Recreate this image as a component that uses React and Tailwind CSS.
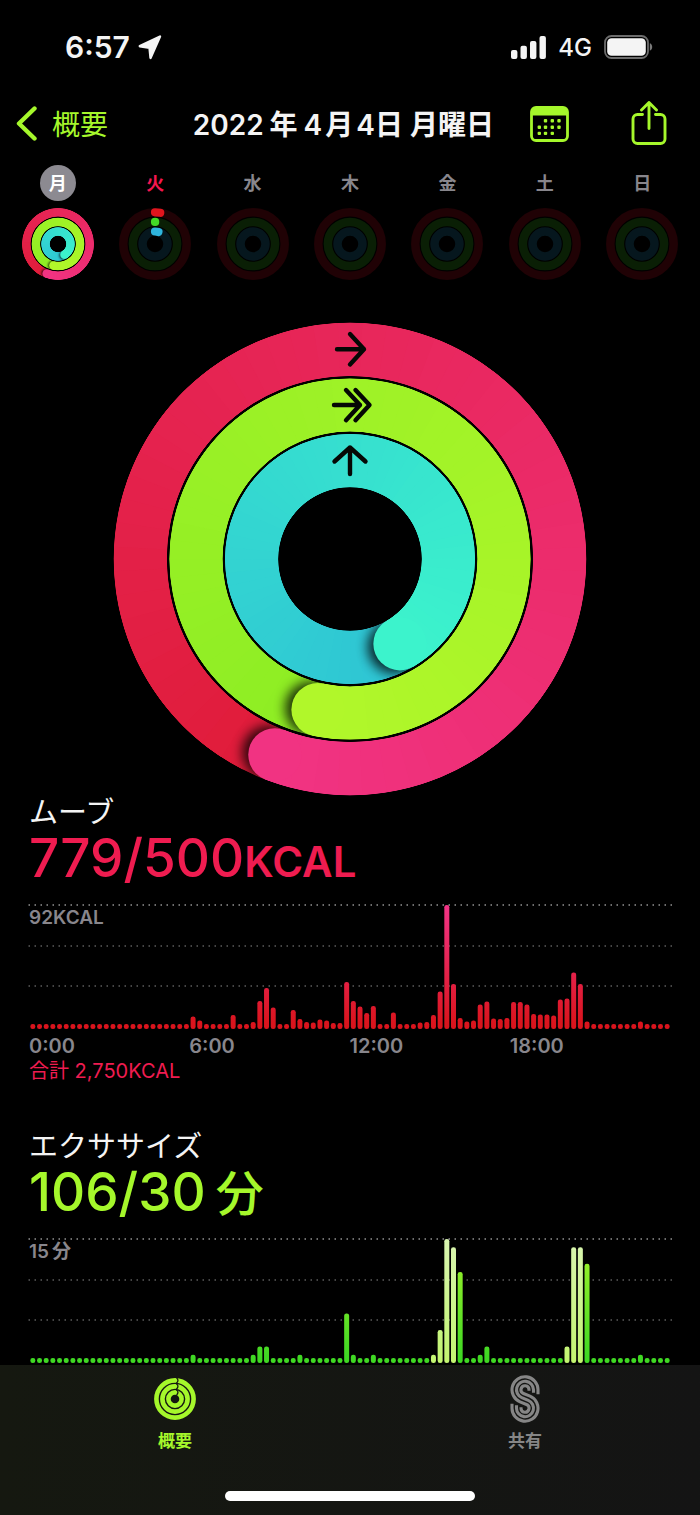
import React from 'react'

// ─── Shared geometry ──────────────────────────────────────────────────────────
// Angles are in degrees, clockwise from twelve o'clock, around (0, 0).
function point(r, deg) {
  const a = (deg * Math.PI) / 180
  return [r * Math.sin(a), -r * Math.cos(a)]
}

function arc(r, from, to) {
  const [x1, y1] = point(r, from)
  const [x2, y2] = point(r, to)
  return `M${x1} ${y1}A${r} ${r} 0 ${to - from > 180 ? 1 : 0} 1 ${x2} ${y2}`
}

function mix(a, b, t) {
  return `rgb(${a.map((v, i) => Math.round(v + (b[i] - v) * t)).join(',')})`
}

// ─── Ring colours ─────────────────────────────────────────────────────────────
const MOVE     = { from: [224, 28, 58],  to: [241, 51, 130], track: '#200205' }
const EXERCISE = { from: [142, 237, 36], to: [177, 247, 42], track: '#0a1f05' }
const STAND    = { from: [46, 196, 212], to: [60, 243, 204], track: '#06171e' }

const LARGE = [
  { ...MOVE,     r: 209.7, end: 201 },
  { ...EXERCISE, r: 154,   end: 192 },
  { ...STAND,    r: 98.4,  end: 149.5 },
]

const SMALL = [
  { ...MOVE,     r: 31.7, end: 201 },
  { ...EXERCISE, r: 22.1, end: 192 },
  { ...STAND,    r: 12.5, end: 149 },
]

// ─── Ring ─────────────────────────────────────────────────────────────────────
// A full lap ending in a round tip that casts a shadow on the lap's start.
// Each segment runs on under the next few so that no seam shows between them.
const STEPS = 60
const OVERLAP = 12

function Ring({ id, r, width, end, from, to }) {
  const step = 360 / STEPS
  const segments = Array.from({ length: STEPS }, (_, i) => {
    const start = end - 360 + i * step
    const stop = Math.min(end, start + step + OVERLAP)
    return (
      <path key={i} d={arc(r, start, stop)} stroke={mix(from, to, i / (STEPS - 1))} strokeWidth={width} fill="none" />
    )
  })
  const [cx, cy] = point(r, end)
  const [sx, sy] = point(r, end + (width / r) * 7)

  return (
    <g>
      <clipPath id={`${id}-band`}>
        <path
          clipRule="evenodd"
          d={[r + width / 2, r - width / 2]
            .map((q) => `M${-q} 0A${q} ${q} 0 1 1 ${q} 0A${q} ${q} 0 1 1 ${-q} 0Z`)
            .join('')}
        />
      </clipPath>
      <filter id={`${id}-blur`} x="-50%" y="-50%" width="200%" height="200%">
        <feGaussianBlur stdDeviation={width / 9} />
      </filter>
      <g clipPath={`url(#${id}-band)`}>
        {segments.slice(0, STEPS - 14)}
        <circle cx={sx} cy={sy} r={width / 2} fill="#000" opacity="0.8" filter={`url(#${id}-blur)`} />
        {segments.slice(STEPS - 14)}
      </g>
      <circle cx={cx} cy={cy} r={width / 2} fill={mix(from, to, 1)} />
    </g>
  )
}

function ActivityRings() {
  return (
    <svg viewBox="-237 -237 474 474" className="mx-auto block w-[474px] max-w-full" role="img" aria-label="アクティビティリング">
      {LARGE.map((ring, i) => (
        <Ring key={i} id={`large-${i}`} width={53.2} {...ring} />
      ))}
      <g fill="none" stroke="#050805" strokeWidth="4.4" strokeLinecap="round" strokeLinejoin="round">
        <path d="M-13 -209.8H14M0 -225L14 -209.8L0 -194.5" />
        <path d="M-16 -154H10M-4 -169L10 -154L-4 -138.8M5.5 -169L19.5 -154L5.5 -138.8" />
        <path d="M0 -85V-111.5M-15.5 -97.5L0 -111.5L15.5 -97.5" />
      </g>
    </svg>
  )
}

// ─── Week strip ───────────────────────────────────────────────────────────────
const DAYS = [
  { label: '月', state: 'selected' },
  { label: '火', state: 'today' },
  { label: '水' },
  { label: '木' },
  { label: '金' },
  { label: '土' },
  { label: '日' },
]

const LABEL_STYLES = {
  selected: 'bg-[#8c8a91] text-white',
  today:    'text-[#f5174f]',
  future:   'text-[#88868c]',
}

function DayRings({ state }) {
  return (
    <svg viewBox="-36 -36 72 72" className="block size-[72px]" aria-hidden="true">
      {state === 'selected'
        ? SMALL.map((ring, i) => <Ring key={i} id={`small-${i}`} width={8.5} {...ring} />)
        : SMALL.map(({ r, track }) => (
            <circle key={r} r={r} fill="none" stroke={track} strokeWidth="8.5" />
          ))}
      {state === 'today' && (
        <g fill="none" strokeWidth="8.2" strokeLinecap="round">
          <path d={arc(31.7, 0, 9.5)} stroke="#e0151d" />
          <path d={arc(22.1, 0, 0.5)} stroke="#43d926" />
          <path d={arc(12.5, 0, 16)} stroke="#2eb4dc" />
        </g>
      )}
    </svg>
  )
}

function WeekStrip() {
  return (
    <div className="grid grid-cols-7 px-[9px] pt-[17px]">
      {DAYS.map(({ label, state = 'future' }) => (
        <button key={label} type="button" className="flex flex-col items-center gap-[7px]">
          <span className={`flex size-[36px] items-center justify-center rounded-full pt-[2px] text-[18px] leading-none font-bold ${LABEL_STYLES[state]}`}>
            {label}
          </span>
          <DayRings state={state} />
        </button>
      ))}
    </div>
  )
}

// ─── Charts ───────────────────────────────────────────────────────────────────
// One bar per quarter of an hour, keyed by its index in the day.
const BARS = 96
const PLOT_W = 641
const PLOT_H = 124

const MOVE_BARS = {
  24: 12.5, 25: 8.5, 30: 14, 33: 7, 34: 28, 35: 41, 36: 21.5, 39: 19, 40: 10, 41: 7, 42: 6.5,
  43: 9.5, 44: 8.5, 45: 6, 46: 6, 47: 47, 48: 28, 49: 22.5, 50: 16, 51: 23, 54: 16.5,
  58: 6.5, 59: 7, 60: 14, 61: 37.5, 62: 124, 63: 45, 64: 11, 65: 7.5, 66: 8.5, 67: 24.5,
  68: 27.5, 69: 10.5, 70: 10, 71: 11, 72: 27, 73: 27, 74: 24.5, 75: 15, 76: 14.5, 77: 14.5,
  78: 13.5, 79: 29.5, 80: 30.5, 81: 56.5, 82: 45, 83: 7.5, 91: 7.5,
}

const EXERCISE_MINUTES = {
  24: 1, 33: 1, 34: 2, 35: 2, 40: 1, 47: 6, 48: 1, 51: 1, 60: 1, 61: 4, 62: 15, 63: 14,
  64: 11, 67: 1, 68: 2, 80: 2, 81: 14, 82: 14, 83: 12, 91: 1,
}
const EXERCISE_BARS = Object.fromEntries(
  Object.entries(EXERCISE_MINUTES).map(([i, min]) => [i, (min * PLOT_H) / 15]),
)
const WORKOUT = [60, 61, 62, 63, 80, 81, 82]

function Chart({ id, bars, bottom, top, highlighted = [], label }) {
  return (
    <svg viewBox={`0 0 ${PLOT_W} ${PLOT_H}`} className="block w-full overflow-visible" role="img" aria-label={label}>
      <defs>
        <linearGradient id={`${id}-fill`} gradientUnits="userSpaceOnUse" x1="0" x2="0" y1={PLOT_H} y2="0">
          <stop offset="0.05" stopColor={bottom} />
          <stop offset="1" stopColor={top} />
        </linearGradient>
        <linearGradient id={`${id}-light`} gradientUnits="userSpaceOnUse" x1="0" x2="0" y1={PLOT_H} y2="0">
          <stop offset="0" stopColor="#c2f56f" />
          <stop offset="1" stopColor="#d9f5b0" />
        </linearGradient>
      </defs>
      {[0, 41, 81].map((y, i) => (
        <line
          key={y} x1="-0.5" x2={PLOT_W + 2} y1={y} y2={y}
          stroke={i === 0 ? '#929292' : '#5c5c5c'} strokeWidth="1.5" strokeDasharray="1.5 4.5"
        />
      ))}
      {Array.from({ length: BARS }, (_, i) => {
        const h = bars[i] ?? 5
        return (
          <rect
            key={i}
            x={(i + 0.5) * (PLOT_W / BARS) - 2}
            y={PLOT_H - h}
            width="5" height={h} rx="2.3"
            fill={highlighted.includes(i) ? `url(#${id}-light)` : `url(#${id}-fill)`}
          />
        )
      })}
    </svg>
  )
}

function Metric({ title, value, unit, color, max, children }) {
  return (
    <section className="pr-[30px] pl-[29px]">
      <h2 className="pt-px text-[29px] leading-[32px] text-[#f4f4f4]">{title}</h2>
      <p className={`flex items-baseline text-[53px] leading-[58px] font-medium ${color}`}>
        {value}
        {unit}
      </p>
      <div className="relative mt-[18px]">
        {children}
        <span className="absolute top-0 left-0 text-[19px] leading-[26px] font-semibold text-[#88868c]">{max}</span>
      </div>
    </section>
  )
}

// ─── Icons ────────────────────────────────────────────────────────────────────
function LocationIcon() {
  return (
    <svg viewBox="0 0 24 25" className="w-[24px]" aria-hidden="true">
      <path d="M1.8 11.2L22 1.6L12.5 23L11.5 12.7Z" fill="#f4f4f4" stroke="#f4f4f4" strokeWidth="2.4" strokeLinejoin="round" />
    </svg>
  )
}

function SignalIcon() {
  return (
    <svg viewBox="0 0 35 23" className="w-[35px]" fill="#f4f4f4" aria-hidden="true">
      <rect x="0" y="14" width="6.4" height="9" rx="2" />
      <rect x="9.5" y="9.7" width="6.4" height="13.3" rx="2" />
      <rect x="19" y="5" width="6.4" height="18" rx="2" />
      <rect x="28.5" y="0" width="6.4" height="23" rx="2" />
    </svg>
  )
}

function BatteryIcon() {
  return (
    <svg viewBox="0 0 49 24" className="w-[49px]" aria-hidden="true">
      <rect x="1" y="1" width="43" height="22" rx="6.5" fill="none" stroke="#6c6c6c" strokeWidth="1.8" />
      <rect x="3.2" y="3.2" width="38.6" height="17.6" rx="4.4" fill="#f4f4f4" />
      <path d="M45.8 8.3C49 9.2 49 14.8 45.8 15.7Z" fill="#7a7a7a" />
    </svg>
  )
}

function CalendarIcon() {
  const dots = [
    [15.5, 14.5], [22.3, 14.5], [29, 14.5],
    [9.3, 21], [15.5, 21], [22.3, 21], [29, 21],
    [9.3, 27.2], [15.5, 27.2], [22.3, 27.2],
  ]
  return (
    <svg viewBox="0 0 39 36" className="w-[39px]" aria-hidden="true">
      <rect x="1.5" y="1.5" width="36" height="33" rx="4.5" fill="none" stroke="#a5f72b" strokeWidth="2.8" />
      <path d="M1 9.5V5.5C1 3 3 1 5.5 1H33.5C36 1 38 3 38 5.5V9.5Z" fill="#a5f72b" />
      {dots.map(([x, y]) => (
        <rect key={`${x}-${y}`} x={x - 1.7} y={y - 1.5} width="3.4" height="3.4" rx="1" fill="#a5f72b" />
      ))}
    </svg>
  )
}

function ShareIcon() {
  return (
    <svg viewBox="0 0 36 45" className="w-[36px]" fill="none" stroke="#a5f72b" strokeWidth="2.9" strokeLinecap="round" strokeLinejoin="round" aria-hidden="true">
      <path d="M11.5 13.5H6.5C4 13.5 2 15.5 2 18V38C2 40.5 4 42.5 6.5 42.5H29.5C32 42.5 34 40.5 34 38V18C34 15.5 32 13.5 29.5 13.5H24.5" />
      <path d="M18 27.5V2M10.5 9L18 1.5L25.5 9" />
    </svg>
  )
}

function RingsTabIcon() {
  return (
    <svg viewBox="-21 -21 42 42" className="w-[42px]" fill="none" stroke="#a5f72b" aria-hidden="true">
      <circle r="18.6" strokeWidth="4.6" />
      <circle r="12.6" strokeWidth="4.6" />
      <circle r="6.6" strokeWidth="4.6" />
      <path d="M1.6 -21C3.4 -19.5 3.4 -17.5 1.6 -16V-15C3.4 -13.8 3.4 -11.6 1.6 -10V-9C3.4 -7.8 3.4 -5.6 1.6 -4" stroke="#141611" strokeWidth="1.3" />
    </svg>
  )
}

// Three parallel strands: each goes round the upper bowl, along a shared
// diagonal, then round the lower bowl.
const BOWL_Y = 9.2
const STRANDS = [
  { upper: 13,  lower: 4,   head: 4.5, tail: 1 },
  { upper: 8.5, lower: 8.5, head: 3,   tail: 3 },
  { upper: 4,   lower: 13,  head: 1,   tail: 4.5 },
]

function strandPath({ upper, lower, head, tail }) {
  const ny = (upper + lower) / (2 * BOWL_Y)
  const nx = -Math.sqrt(1 - ny * ny)
  return [
    `M${upper} ${head - BOWL_Y}V${-BOWL_Y}`,
    `A${upper} ${upper} 0 1 0 ${upper * nx} ${upper * ny - BOWL_Y}`,
    `L${-lower * nx} ${BOWL_Y - lower * ny}`,
    `A${lower} ${lower} 0 1 1 ${-lower} ${BOWL_Y}V${BOWL_Y - tail}`,
  ].join('')
}

function SharingTabIcon() {
  return (
    <svg viewBox="-15 -24 30 48" className="h-[48px] w-[30px]" fill="none" stroke="#868686" strokeWidth="3.1" aria-hidden="true">
      {STRANDS.map((strand) => <path key={strand.upper} d={strandPath(strand)} />)}
    </svg>
  )
}

// ─── App ──────────────────────────────────────────────────────────────────────
const HOURS = ['0:00', '6:00', '12:00', '18:00']

export default function App() {
  return (
    <div
      lang="ja"
      className="flex min-h-screen flex-col bg-black font-['Inter','Noto_Sans_CJK_JP',sans-serif]"
    >
      {/* Status bar */}
      <div className="flex h-[94px] items-center justify-between pr-[47px] pl-[65px] text-[#f4f4f4]">
        <div className="flex items-center gap-[8px]">
          <span className="text-[30px] leading-none font-semibold">6:57</span>
          <LocationIcon />
        </div>
        <div className="flex items-center gap-[12px]">
          <SignalIcon />
          <span className="pt-[2px] text-[24px] leading-none font-medium">4G</span>
          <BatteryIcon />
        </div>
      </div>

      {/* Navigation */}
      <header className="flex h-[54px] items-center pt-[5px] pr-[33px] pl-[16px] text-[#a5f72b]">
        <button type="button" className="flex items-center gap-[15px] text-[28px] leading-[32px]">
          <svg viewBox="0 0 21 35" className="w-[21px]" aria-hidden="true">
            <path d="M18.5 2.5L3 17.5L18.5 32.5" fill="none" stroke="#a5f72b" strokeWidth="4.4" strokeLinecap="round" strokeLinejoin="round" />
          </svg>
          <span className="pt-[2px]">概要</span>
        </button>
        <h1 className="mr-[36px] ml-auto pt-[2px] text-[28px] leading-[32px] font-semibold whitespace-nowrap text-[#f4f4f4]">
          2022<span className="mx-[6px]">年</span>4<span className="mx-[3px]">月</span>4日 月曜日
        </h1>
        <div className="flex items-center gap-[62px]">
          <button type="button" aria-label="カレンダー"><CalendarIcon /></button>
          <button type="button" aria-label="共有する"><ShareIcon /></button>
        </div>
      </header>

      <WeekStrip />

      <main className="pt-[42px]">
        <ActivityRings />

        <Metric
          title="ムーブ"
          value="779/500"
          unit={<span className="text-[42px] leading-none font-semibold">KCAL</span>}
          color="text-[#ef1c50]"
          max="92KCAL"
        >
          <Chart id="move" bars={MOVE_BARS} bottom="#da141d" top="#f23487" label="ムーブ" />
        </Metric>
        <div className="pr-[30px] pl-[29px]">
          <div className="grid grid-cols-4 pt-[4px] text-[20px] leading-[26px] font-semibold text-[#88868c]">
            {HOURS.map((hour) => <span key={hour}>{hour}</span>)}
          </div>
          <p className="text-[20px] leading-[24px] text-[#ef1c50]">合計 2,750KCAL</p>
        </div>

        <div className="pt-[47px]">
          <Metric
            title="エクササイズ"
            value="106/30"
            unit={<span className="ml-[10px] text-[48px] leading-none">分</span>}
            color="text-[#a5f72b]"
            max={<>15<span className="ml-[3px]">分</span></>}
          >
            <Chart id="exercise" bars={EXERCISE_BARS} bottom="#3fd823" top="#a8f52b" highlighted={WORKOUT} label="エクササイズ" />
          </Metric>
        </div>
      </main>

      {/* Tab bar */}
      <footer className="mt-auto bg-linear-to-r from-[#151810] to-[#141414] pb-[14px]">
        <nav className="grid h-[126px] grid-cols-2 items-start pt-[10px] text-[17px] leading-[24px] font-bold">
          <button type="button" className="flex flex-col items-center gap-[6px] text-[#a5f72b]">
            <span className="flex h-[48px] items-center"><RingsTabIcon /></span>
            概要
          </button>
          <button type="button" className="flex flex-col items-center gap-[6px] text-[#868686]">
            <span className="flex h-[48px] items-center"><SharingTabIcon /></span>
            共有
          </button>
        </nav>
        <div className="mx-auto h-[10px] w-[250px] rounded-full bg-white" />
      </footer>
    </div>
  )
}
